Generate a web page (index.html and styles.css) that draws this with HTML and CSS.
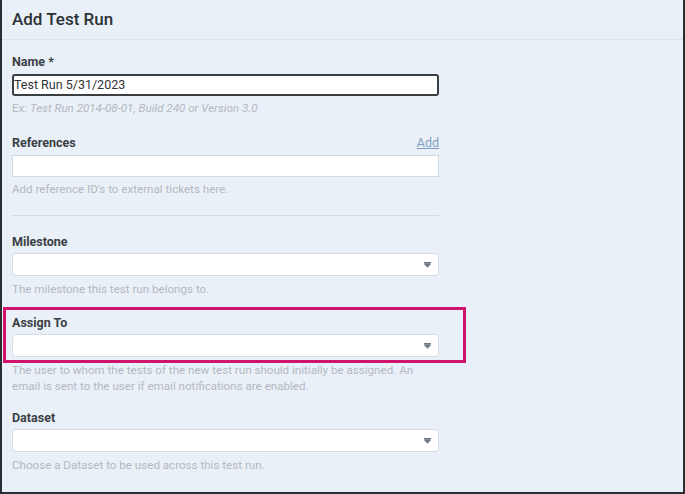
FILE: index.html
```html
<!DOCTYPE html>
<html lang="en">
<head>
    <meta charset="UTF-8">
    <meta name="viewport" content="width=device-width, initial-scale=1.0">
    <title>Add Test Run</title>
    <link rel="stylesheet" href="styles.css">
</head>
<body>
    <div class="dialog">
        <header class="dialog-header">
            <h1>Add Test Run</h1>
        </header>

        <form class="dialog-form">
            <div class="field">
                <label class="field-label">Name *</label>
                <div class="text-input focused">Test Run 5/31/2023</div>
                <p class="field-hint"><span class="hint-plain">Ex:</span> <em>Test Run 2014-08-01, Build 240 or Version 3.0</em></p>
            </div>

            <div class="field">
                <div class="label-row">
                    <label class="field-label">References</label>
                    <a class="label-link" href="#">Add</a>
                </div>
                <div class="text-input"></div>
                <p class="field-hint">Add reference ID's to external tickets here.</p>
            </div>

            <hr class="divider">

            <div class="field">
                <label class="field-label">Milestone</label>
                <div class="select-input">
                    <svg class="caret" width="9" height="7" viewBox="0 0 9 7"><path d="M1 1.5h7M1.6 2.8h5.8L4.5 6z" fill="#6f7882" stroke="#6f7882" stroke-width="1.1" stroke-linejoin="round"/></svg>
                </div>
                <p class="field-hint">The milestone this test run belongs to.</p>
            </div>

            <div class="field highlighted">
                <span class="highlight-box"></span>
                <label class="field-label">Assign To</label>
                <div class="select-input">
                    <svg class="caret" width="9" height="7" viewBox="0 0 9 7"><path d="M1 1.5h7M1.6 2.8h5.8L4.5 6z" fill="#6f7882" stroke="#6f7882" stroke-width="1.1" stroke-linejoin="round"/></svg>
                </div>
                <p class="field-hint">The user to whom the tests of the new test run should initially be assigned. An<br>email is sent to the user if email notifications are enabled.</p>
            </div>

            <div class="field">
                <label class="field-label">Dataset</label>
                <div class="select-input">
                    <svg class="caret" width="9" height="7" viewBox="0 0 9 7"><path d="M1 1.5h7M1.6 2.8h5.8L4.5 6z" fill="#6f7882" stroke="#6f7882" stroke-width="1.1" stroke-linejoin="round"/></svg>
                </div>
                <p class="field-hint">Choose a Dataset to be used across this test run.</p>
            </div>
        </form>
    </div>
</body>
</html>
```

FILE: styles.css
```css
* {
    margin: 0;
    padding: 0;
    box-sizing: border-box;
}

:root {
    --bg: #eaf0f7;
    --text-dark: #33383e;
    --hint: #b3b9c1;
    --input-border: #d2dae3;
    --highlight: #d0136c;
}

body {
    font-family: Roboto, "Liberation Sans", sans-serif;
    background: var(--bg);
    color: var(--text-dark);
    width: 685px;
    height: 494px;
    overflow: hidden;
}

.dialog {
    height: 494px;
    border-left: 2px solid #2a2e33;
    border-right: 2px solid #2a2e33;
    border-bottom: 2px solid #2a2e33;
    background: var(--bg);
}

.dialog-header {
    height: 40px;
    padding: 8px 10px 0;
    border-bottom: 1px solid #dbe3ec;
}

.dialog-header h1 {
    font-size: 17px;
    font-weight: 500;
    line-height: 22px;
    color: #2c3136;
}

.dialog-form {
    padding: 14px 10px 0;
    width: 447px;
}

.field {
    margin-bottom: 18px;
}

.highlighted {
    position: relative;
    margin-bottom: 16px;
}

.highlight-box {
    position: absolute;
    left: -9px;
    top: -8px;
    width: 463px;
    height: 56px;
    border: 3px solid var(--highlight);
}

.label-row {
    display: flex;
    justify-content: space-between;
    align-items: center;
    height: 18px;
}

.field-label {
    display: block;
    font-size: 12.5px;
    font-weight: 700;
    line-height: 16px;
    color: #3a3f45;
}

.label-link {
    font-size: 12.5px;
    line-height: 16px;
    color: #7f9fc6;
    text-decoration: underline;
}

.text-input {
    margin-top: 4px;
    height: 22px;
    background: #fff;
    border: 1px solid var(--input-border);
    font-size: 12.5px;
    line-height: 20px;
    padding-left: 1px;
    color: #2f3338;
}

.label-row + .text-input {
    margin-top: 3px;
}

.text-input.focused {
    border: 2px solid #3a3f44;
    border-radius: 3px;
    line-height: 18px;
    padding-left: 0;
}

.select-input {
    margin-top: 3px;
    height: 23px;
    background: #fff;
    border: 1px solid #d6dce3;
    border-radius: 4px;
    display: flex;
    align-items: center;
    justify-content: flex-end;
    padding-right: 6px;
}

.field-hint {
    margin-top: 4px;
    font-size: 11.6px;
    line-height: 16px;
    color: var(--hint);
}

.select-input + .field-hint {
    margin-top: 5px;
}

.field-hint em {
    font-style: italic;
}

.divider {
    border: none;
    border-top: 1px solid #d3dbe4;
    margin: 1px 0 18px;
}
```
